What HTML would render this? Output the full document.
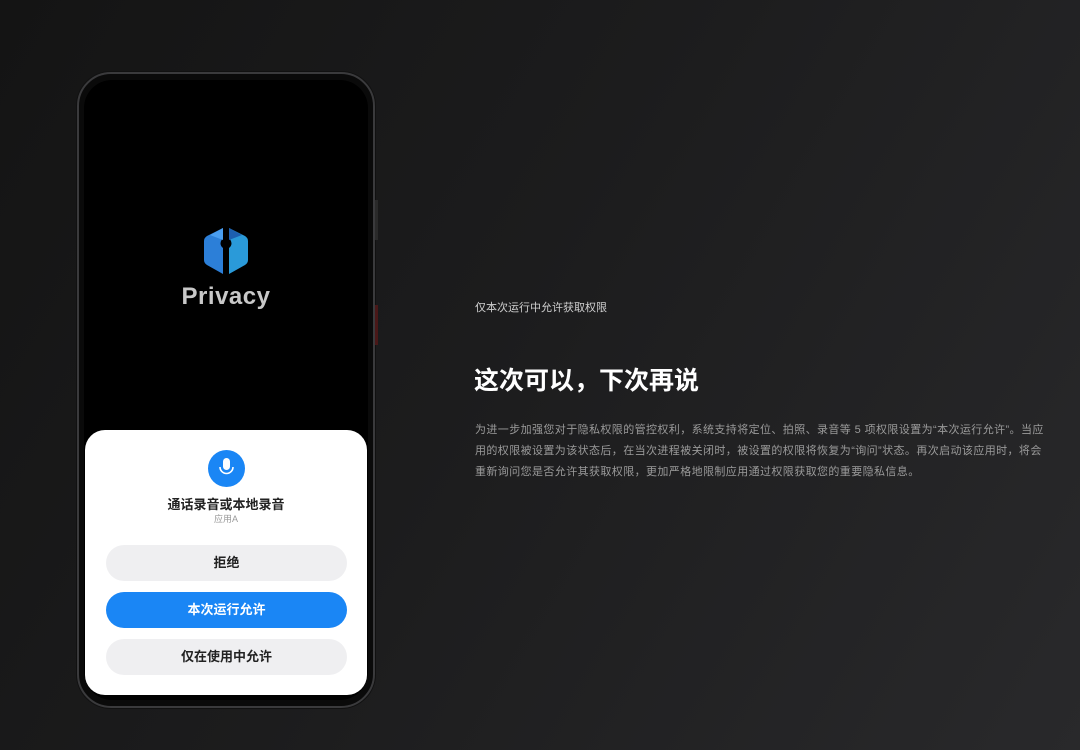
<!DOCTYPE html>
<html><head><meta charset="utf-8"><style>
*{margin:0;padding:0;box-sizing:border-box}
body{width:1080px;height:750px;overflow:hidden;background:linear-gradient(120deg,#141414 0%,#1c1c1d 45%,#29292b 100%);font-family:"Liberation Sans","Noto Sans CJK SC",sans-serif;position:relative}
.phone{position:absolute;left:77px;top:72px;width:298px;height:636px;border-radius:34px;background:#0a0a0a;border:2px solid #3a3a3c;box-shadow:0 0 0 1px #111}
.screen{position:absolute;left:84px;top:80px;width:284px;height:620px;border-radius:28px;background:#000;overflow:hidden}
.sheet{position:absolute;left:1px;top:350px;width:282px;height:265px;background:#fff;border-radius:20px}
.btn{position:absolute;left:21px;width:241px;height:36px;border-radius:18px;background:#efeff1;color:#222;font-size:13px;font-weight:bold;text-align:center;line-height:36px}
.side{position:absolute;left:375px;width:3px;background:#2a2a2a}
</style></head><body>
<div class="phone"></div>
<div class="side" style="top:200px;height:40px"></div>
<div class="side" style="top:305px;height:40px;background:#4a1818"></div>
<div class="screen">
<svg style="position:absolute;left:118px;top:146px" width="48" height="50" viewBox="0 0 48 50">
<path d="M21 2 L5 10 Q2 12 2 15 L2 34 Q2 37 5 39 L21 48 L21 22 Q16 18 21 12 Z" fill="#2c7fd8"/>
<path d="M27 2 L43 10 Q46 12 46 15 L46 34 Q46 37 43 39 L27 48 L27 22 Q32 18 27 12 Z" fill="#2a9ad9"/>
<path d="M21 2 L8 9 L21 14 Z" fill="#4a9ef0"/>
<path d="M27 2 L40 9 L27 14 Z" fill="#1d5fb0"/>
</svg>
<div style="position:absolute;left:0;width:284px;top:203px;text-align:center;color:#c8c8c8;font-size:24px;font-weight:bold;font-family:'Liberation Sans',sans-serif;letter-spacing:0.5px">Privacy</div>
<div class="sheet">
<div style="position:absolute;left:123px;top:20px;width:37px;height:37px;border-radius:50%;background:#1a86f5"></div>
<svg style="position:absolute;left:131px;top:27px" width="21" height="23" viewBox="0 0 21 23"><rect x="7" y="1" width="7" height="12" rx="3.5" fill="#fff"/><path d="M4 10 a6.5 6.5 0 0 0 13 0" fill="none" stroke="#fff" stroke-width="1.6"/></svg>
<div style="position:absolute;top:64px;width:282px;text-align:center;font-size:13px;font-weight:bold;color:#222">通话录音或本地录音</div>
<div style="position:absolute;top:82px;width:282px;text-align:center;font-size:9px;color:#999">应用A</div>
<div class="btn" style="top:115px">拒绝</div>
<div class="btn" style="top:162px;background:#1a86f5;color:#fff">本次运行允许</div>
<div class="btn" style="top:209px">仅在使用中允许</div>
</div>
</div>
<div style="position:absolute;left:475px;top:299px;font-size:11px;color:#cfcfcf">仅本次运行中允许获取权限</div>
<div style="position:absolute;left:474px;top:361px;font-size:25px;font-weight:bold;color:#fff">这次可以，下次再说</div>
<div style="position:absolute;left:475px;top:420px;width:570px;font-size:11px;letter-spacing:0.4px;line-height:21px;color:#9a9a9a">为进一步加强您对于隐私权限的管控权利，系统支持将定位、拍照、录音等 5 项权限设置为“本次运行允许”。当应用的权限被设置为该状态后，在当次进程被关闭时，被设置的权限将恢复为“询问”状态。再次启动该应用时，将会重新询问您是否允许其获取权限，更加严格地限制应用通过权限获取您的重要隐私信息。</div>
</body></html>
